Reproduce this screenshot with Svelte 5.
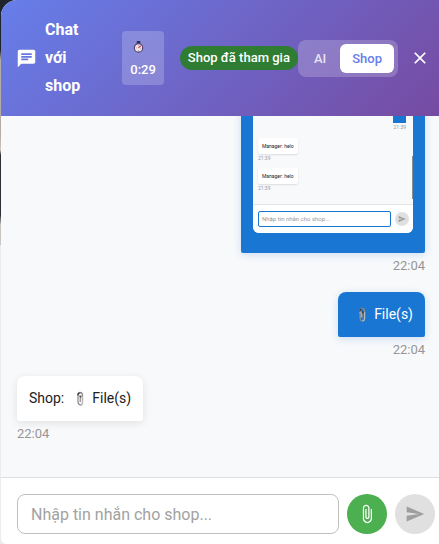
<script>
  let mode = $state('shop');
  let draft = $state('');
</script>

{#snippet clip()}
  <svg class="emoji" viewBox="0 0 12 16" aria-label="paperclip" role="img">
    <path d="M4 6V3.500Q4 1.500 6 1.500T8.500 3.500V11Q8.500 14 6.500 14T4 11V6.500Q4 5 5 5T6.200 6.500V11" fill="none" stroke="#8b8b8b" stroke-width="1.300" />
    <path d="M4 6V3.500Q4 2 6 2M8.700 5v6Q8.700 14 6.500 14M5.200 5.500v5" fill="none" stroke="#ddd" stroke-width=".7" />
    <path d="M3.800 4.500Q4 1.800 6.200 2M6.800 4.500v2" fill="none" stroke="#333" stroke-width="1.200" />
  </svg>
{/snippet}

{#snippet plane()}
  <svg viewBox="0 0 24 24" aria-hidden="true"><path d="M2.010 21 23 12 2.010 3 2 10l15 2-15 2z" fill="currentColor" /></svg>
{/snippet}

<main class="panel">
  <header>
    <svg class="chat" viewBox="0 0 24 24" aria-hidden="true">
      <path d="M20 2H4c-1.100 0-1.990.9-1.990 2L2 22l4-4h14c1.100 0 2-.9 2-2V4c0-1.100-.9-2-2-2M6 9h12v2H6zm8 5H6v-2h8zm4-6H6V6h12z" fill="currentColor" />
    </svg>
    <h1>Chat với shop</h1>
    <div class="timer">
      <span class="watch">
        <svg viewBox="0 0 14 16" aria-label="timer" role="img">
          <path d="M5 1h4v3H5z" fill="#30304f" />
          <circle cx="7" cy="9" r="4.800" fill="#f1e4e8" stroke="#514466" stroke-width="1.300" />
          <path d="m7 9 2.500-2.500" stroke="#dc3b58" stroke-width="1.500" />
          <path d="M7 5.500v1M4 9h1M7 11.500v1M10 9.500h-1" stroke="#77718a" stroke-width=".7" />
        </svg>
      </span>
      <span>0:29</span>
    </div>
    <span class="chip">Shop đã tham gia</span>
    <div class="toggle">
      <button type="button" class:active={mode === 'ai'} onclick={() => (mode = 'ai')}>AI</button>
      <button type="button" class:active={mode === 'shop'} onclick={() => (mode = 'shop')}>Shop</button>
    </div>
    <button type="button" class="close" aria-label="Close">
      <svg viewBox="0 0 24 24"><path d="M19 6.410 17.590 5 12 10.590 6.410 5 5 6.410 10.590 12 5 17.590 6.410 19 12 13.410 17.590 19 19 17.590 13.410 12z" fill="currentColor" /></svg>
    </button>
  </header>

  <section class="messages">
    <article class="mine">
      <div class="bubble photo">
        <div class="shot">
          <div class="mini-list">
            <div class="mini-own"></div>
            <time class="right">21:39</time>
            <div class="mini-card">Manager: helo</div>
            <time>21:39</time>
            <div class="mini-card">Manager: helo</div>
            <time>21:39</time>
            <i class="thumb"></i>
          </div>
          <div class="mini-composer">
            <div class="mini-input">Nhập tin nhắn cho shop...</div>
            <div class="mini-send">{@render plane()}</div>
          </div>
        </div>
      </div>
      <time>22:04</time>
    </article>
    <article class="mine">
      <div class="bubble">{@render clip()}<span>File(s)</span></div>
      <time>22:04</time>
    </article>
    <article>
      <div class="bubble"><span class="sender">Shop:</span>{@render clip()}<span>File(s)</span></div>
      <time>22:04</time>
    </article>
  </section>

  <form class="composer" onsubmit={(e) => e.preventDefault()}>
    <input type="text" aria-label="Tin nhắn" placeholder="Nhập tin nhắn cho shop..." bind:value={draft} />
    <button type="button" class="round attach" aria-label="Attach file">
      <svg viewBox="0 0 24 24"><path d="M16.500 6v11.500c0 2.210-1.790 4-4 4s-4-1.790-4-4V5c0-1.380 1.120-2.500 2.500-2.500s2.500 1.120 2.500 2.500v10.500c0 .55-.45 1-1 1s-1-.45-1-1V6H10v9.500c0 1.380 1.120 2.500 2.500 2.500s2.500-1.120 2.500-2.500V5c0-2.210-1.790-4-4-4S7 2.790 7 5v12.500c0 3.040 2.460 5.500 5.500 5.500s5.500-2.460 5.500-5.500V6z" fill="currentColor" /></svg>
    </button>
    <button type="submit" class="round send" aria-label="Send">{@render plane()}</button>
  </form>
</main>

<style>
  :global(body) {
    background: linear-gradient(#20242c 0 50px, #b5ada5 60px 135px, #d0c8bc 150px, #2b3036 155px 215px, #c9c5c1 225px 245px, #ececee 245px);
    font-family: Roboto, "Noto Sans", sans-serif;
  }
  * { box-sizing: border-box; }
  button { border: 0; padding: 0; background: none; font: inherit; cursor: pointer; }
  svg { display: block; flex: none; }
  .panel {
    display: flex;
    flex-direction: column;
    height: 100vh;
    margin-left: 1px;
    overflow: hidden;
    border-radius: 16px 0 0 6px;
    background: #f8f9fb;
  }
  header {
    display: flex;
    align-items: center;
    flex: none;
    padding: 16px 9px 16px 15px;
    color: #fff;
    background: linear-gradient(135deg, #667eea, #764ba2);
  }
  .chat { width: 21px; height: 21px; }
  h1 {
    flex: 1 1 0;
    min-width: 0;
    margin: 0 24px 0 8px;
    font-size: 16px;
    line-height: 28px;
    font-weight: 700;
  }
  .timer {
    display: flex;
    flex-direction: column;
    margin-right: 16px;
    padding: 4px 8px;
    border-radius: 4px;
    background: rgba(255, 255, 255, .2);
    font-size: 13px;
    line-height: 23px;
    font-weight: 500;
  }
  .watch { display: flex; align-items: center; height: 23px; padding-left: 2px; }
  .watch svg { width: 13px; height: 14px; }
  .chip {
    padding: 0 8px;
    border-radius: 12px;
    background: #2e7d32;
    font-size: 13px;
    line-height: 24px;
    font-weight: 500;
    white-space: nowrap;
  }
  .toggle {
    display: flex;
    gap: 2px;
    padding: 4px;
    border-radius: 8px;
    background: rgba(255, 255, 255, .2);
  }
  .toggle button {
    padding: 0 12px;
    border-radius: 6px;
    color: rgba(255, 255, 255, .8);
    font-size: 13px;
    line-height: 29px;
    font-weight: 500;
  }
  .toggle .active { background: #fff; color: #667eea; }
  .close { margin-left: 12px; color: #fff; }
  .close svg { width: 20px; height: 20px; }
  .messages {
    display: flex;
    flex: 1;
    flex-direction: column;
    justify-content: flex-end;
    gap: 17px;
    min-height: 0;
    overflow: hidden;
    padding: 0 14px 34px 16px;
  }
  article { display: flex; flex-direction: column; align-items: flex-start; flex: none; }
  .mine { align-items: flex-end; }
  .bubble {
    display: flex;
    align-items: center;
    padding: 12px;
    border-radius: 8px 8px 2px 2px;
    background: #fff;
    color: #212121;
    box-shadow: 0 2px 8px rgba(0, 0, 0, .1);
    font-size: 14px;
    line-height: 21px;
  }
  .mine .bubble { background: #1976d2; color: #fff; box-shadow: 0 2px 8px rgba(25, 118, 210, .2); }
  .sender { margin-right: 4px; }
  .emoji { width: 12px; height: 16px; margin: 0 6px; }
  article > time { margin-top: 4px; color: #969696; font-size: 13px; line-height: 18px; }
  .bubble.photo { padding: 12px 12px 20px; }
  .shot {
    width: 160px;
    overflow: hidden;
    border-radius: 6px;
    background: #f8f9fb;
    color: #222;
    font-size: 5px;
    line-height: 8px;
  }
  .mini-list {
    display: flex;
    position: relative;
    flex-direction: column;
    align-items: flex-start;
    padding: 0 7px 12px 5px;
  }
  .mini-list time { color: #999; }
  .mini-list .right { align-self: flex-end; margin-bottom: 7px; }
  .mini-own { align-self: flex-end; width: 13px; height: 40px; background: #1976d2; }
  .mini-card {
    padding: 4px;
    border-radius: 2px;
    background: #fff;
    box-shadow: 0 1px 2px rgba(0, 0, 0, .12);
  }
  .mini-card + time { margin-bottom: 6px; }
  .mini-card + time:last-of-type { margin-bottom: 0; }
  .thumb { position: absolute; right: 0; bottom: 5px; width: 1px; height: 43px; background: #8e8e8e; }
  .mini-composer {
    display: flex;
    align-items: center;
    gap: 4px;
    padding: 6px 4px 6px 5px;
    border-top: 1px solid #e4e4e4;
    background: #fff;
  }
  .mini-input { flex: 1; padding: 3px; border: 1px solid #1976d2; border-radius: 2px; color: #999; font-size: 6px; }
  .mini-send { padding: 3px; border-radius: 50%; background: #e0e0e0; color: #999; }
  .mini-send svg { width: 8px; height: 8px; }
  .composer {
    display: flex;
    flex: none;
    gap: 8px;
    padding: 16px 4px 10px 16px;
    border-top: 1px solid #e0e0e0;
    background: #fff;
  }
  input {
    flex: 1;
    min-width: 0;
    height: 40px;
    padding: 0 13px;
    border: 1px solid #c0c0c0;
    border-radius: 8px;
    background: #fff;
    color: #212121;
    font: 16px/24px Roboto, "Noto Sans", sans-serif;
  }
  input::placeholder { color: #a2a2a2; opacity: 1; }
  .round {
    display: flex;
    align-items: center;
    justify-content: center;
    width: 40px;
    height: 40px;
    border-radius: 50%;
  }
  .round svg { width: 20px; height: 20px; }
  .attach { background: #4caf50; color: #fff; }
  .send { background: #e0e0e0; color: #9e9e9e; }
</style>
